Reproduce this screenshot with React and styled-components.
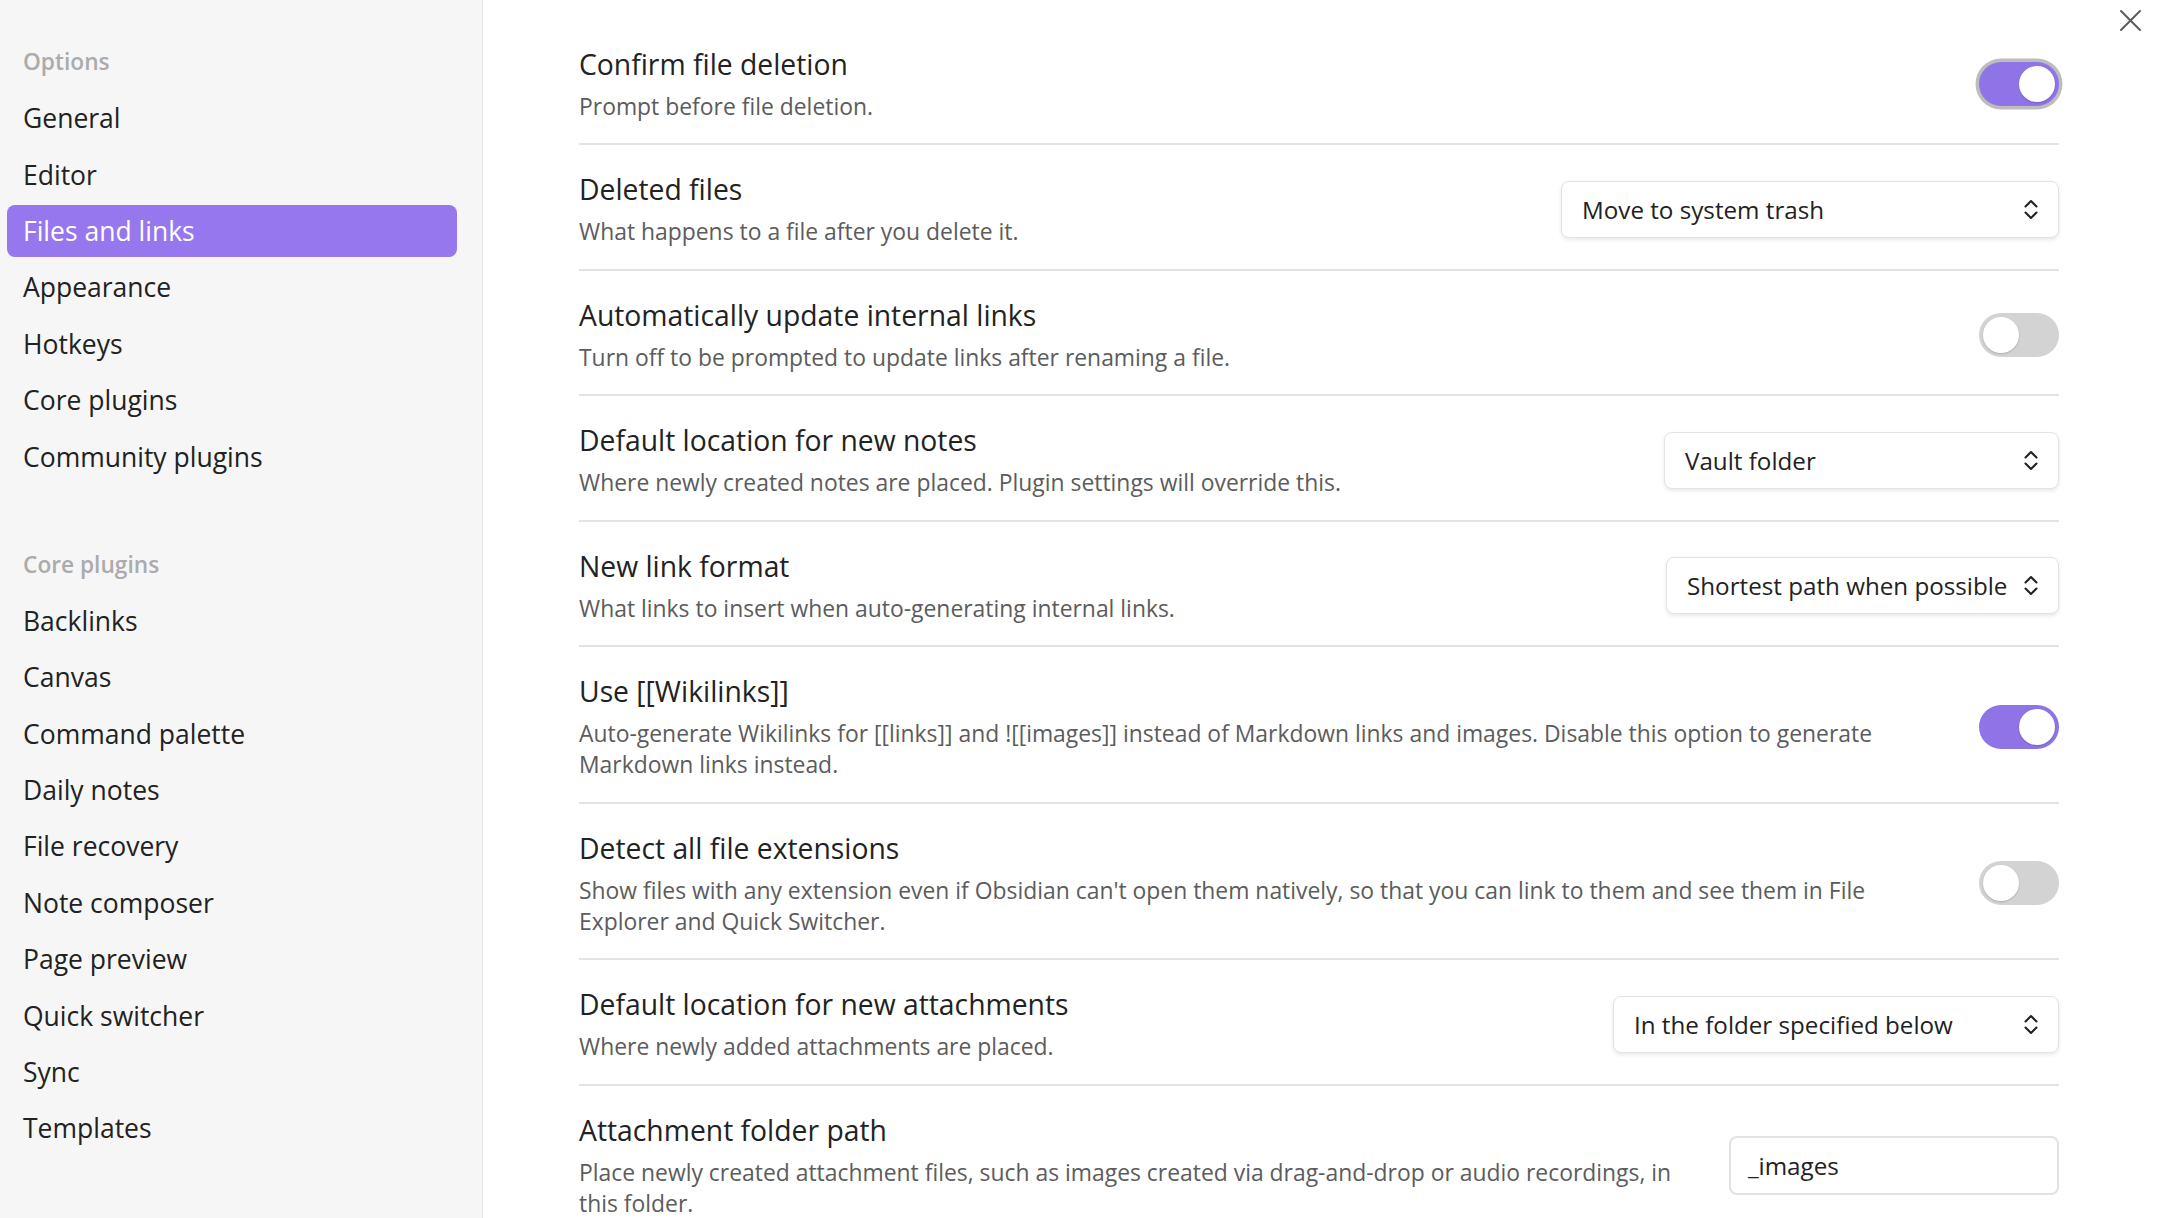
import React from "react";
import styled, { createGlobalStyle } from "styled-components";

const GlobalStyle = createGlobalStyle`
  html, body, #root { margin: 0; padding: 0; height: 100%; }
  body {
    font-family: "Open Sans", "Noto Sans", "Liberation Sans", sans-serif;
    color: #222222;
    background: #ffffff;
    overflow: hidden;
  }
  * { box-sizing: border-box; }
`;

const Shell = styled.div`
  display: flex;
  width: 100%;
  height: 1218px;
  position: relative;
`;

const Sidebar = styled.nav`
  width: 483px;
  flex-shrink: 0;
  background: #f6f6f6;
  border-right: 1px solid #e3e3e3;
  padding: 35.8px 25px 0 7px;
  display: flex;
  flex-direction: column;
  gap: 56px;
`;

const NavGroup = styled.div`
  display: flex;
  flex-direction: column;
  gap: 4.4px;
`;

const GroupTitle = styled.div`
  height: 52px;
  display: flex;
  align-items: center;
  padding: 0 16px;
  font-size: 22.7px;
  font-weight: 600;
  color: #ababab;
`;

const NavItem = styled.div`
  height: 52px;
  display: flex;
  align-items: center;
  padding: 0 16px;
  border-radius: 8px;
  font-size: 26.5px;
  color: ${(p) => (p.$active ? "#ffffff" : "#222222")};
  background: ${(p) => (p.$active ? "#9677ed" : "transparent")};
`;

const Main = styled.main`
  flex: 1;
  min-width: 0;
  background: #ffffff;
  padding: 19.6px 98px 0 96px;
  overflow: hidden;
`;

const CloseButton = styled.button`
  position: absolute;
  top: 8px;
  right: 14px;
  width: 25px;
  height: 25px;
  padding: 0;
  border: none;
  background: transparent;
  display: flex;
  align-items: center;
  justify-content: center;
  color: #5c5c5c;
`;

const SettingItem = styled.div`
  display: flex;
  align-items: center;
  padding: 26px 0 21.5px;
  border-top: ${(p) => (p.$first ? "none" : "2px solid #e3e3e3")};
`;

const Info = styled.div`
  flex: 1;
  min-width: 0;
  margin-right: 48px;
`;

const Name = styled.div`
  font-size: 28.3px;
  line-height: 36px;
  color: #222222;
`;

const Desc = styled.div`
  margin-top: 9px;
  font-size: 22.9px;
  line-height: 31px;
  color: #5c5c5c;
`;

const Control = styled.div`
  flex-shrink: 0;
  display: flex;
  align-items: center;
  justify-content: flex-end;
`;

const ToggleTrack = styled.div`
  position: relative;
  width: 80px;
  height: 44px;
  border-radius: 22px;
  background: ${(p) => (p.$on ? "#8f74e8" : "#d3d3d3")};
  box-shadow: ${(p) => (p.$focus ? "0 0 0 3.5px #bdbdbd" : "none")};
`;

const ToggleKnob = styled.div`
  position: absolute;
  top: 4px;
  left: ${(p) => (p.$on ? "40px" : "4px")};
  width: 36px;
  height: 36px;
  border-radius: 50%;
  background: #ffffff;
  box-shadow: 0 1px 2px rgba(0, 0, 0, 0.18);
`;

const Dropdown = styled.div`
  width: ${(p) => p.$width}px;
  height: 57px;
  display: flex;
  align-items: center;
  justify-content: space-between;
  padding: 0 20px 0 20px;
  border: 1.5px solid #e3e3e3;
  border-radius: 8px;
  background: #ffffff;
  box-shadow: 0 2px 4px rgba(0, 0, 0, 0.09);
  font-size: 24.2px;
  color: #222222;
  white-space: nowrap;
`;

const TextInput = styled.div`
  width: 330px;
  height: 59px;
  display: flex;
  align-items: center;
  padding: 0 17px;
  border: 2px solid #e3e3e3;
  border-radius: 8px;
  background: #ffffff;
  font-size: 24.2px;
  color: #222222;
`;

const Chevrons = () => (
  <svg width="14" height="21" viewBox="0 0 14 21" fill="none" stroke="#222" strokeWidth="2.1" strokeLinecap="round" strokeLinejoin="round">
    <path d="M1.5 7.5 L7 2 L12.5 7.5" />
    <path d="M1.5 13.5 L7 19 L12.5 13.5" />
  </svg>
);

const Toggle = ({ on, focus }) => (
  <ToggleTrack $on={on} $focus={focus}>
    <ToggleKnob $on={on} />
  </ToggleTrack>
);

const Select = ({ value, width }) => (
  <Dropdown $width={width}>
    <span>{value}</span>
    <Chevrons />
  </Dropdown>
);

const optionsNav = ["General", "Editor", "Files and links", "Appearance", "Hotkeys", "Core plugins", "Community plugins"];
const pluginsNav = ["Backlinks", "Canvas", "Command palette", "Daily notes", "File recovery", "Note composer", "Page preview", "Quick switcher", "Sync", "Templates"];

const settings = [
  { name: "Confirm file deletion", desc: "Prompt before file deletion.", control: <Toggle on focus /> },
  { name: "Deleted files", desc: "What happens to a file after you delete it.", control: <Select value="Move to system trash" width={498} /> },
  { name: "Automatically update internal links", desc: "Turn off to be prompted to update links after renaming a file.", control: <Toggle on={false} /> },
  { name: "Default location for new notes", desc: "Where newly created notes are placed. Plugin settings will override this.", control: <Select value="Vault folder" width={395} /> },
  { name: "New link format", desc: "What links to insert when auto-generating internal links.", control: <Select value="Shortest path when possible" width={393} /> },
  { name: "Use [[Wikilinks]]", desc: "Auto-generate Wikilinks for [[links]] and ![[images]] instead of Markdown links and images. Disable this option to generate Markdown links instead.", control: <Toggle on /> },
  { name: "Detect all file extensions", desc: "Show files with any extension even if Obsidian can't open them natively, so that you can link to them and see them in File Explorer and Quick Switcher.", control: <Toggle on={false} /> },
  { name: "Default location for new attachments", desc: "Where newly added attachments are placed.", control: <Select value="In the folder specified below" width={446} /> },
  { name: "Attachment folder path", desc: "Place newly created attachment files, such as images created via drag-and-drop or audio recordings, in this folder.", control: <TextInput>_images</TextInput> },
];

export default function App() {
  return (
    <>
      <GlobalStyle />
      <Shell>
        <Sidebar>
          <NavGroup>
            <GroupTitle>Options</GroupTitle>
            {optionsNav.map((n) => (
              <NavItem key={n} $active={n === "Files and links"}>{n}</NavItem>
            ))}
          </NavGroup>
          <NavGroup>
            <GroupTitle>Core plugins</GroupTitle>
            {pluginsNav.map((n) => (
              <NavItem key={n}>{n}</NavItem>
            ))}
          </NavGroup>
        </Sidebar>
        <Main>
          {settings.map((s, i) => (
            <SettingItem key={s.name} $first={i === 0}>
              <Info>
                <Name>{s.name}</Name>
                <Desc>{s.desc}</Desc>
              </Info>
              <Control>{s.control}</Control>
            </SettingItem>
          ))}
        </Main>
        <CloseButton aria-label="Close">
          <svg width="23" height="23" viewBox="0 0 23 23" fill="none" stroke="currentColor" strokeWidth="2" strokeLinecap="round">
            <path d="M2 2 L21 21" />
            <path d="M21 2 L2 21" />
          </svg>
        </CloseButton>
      </Shell>
    </>
  );
}
